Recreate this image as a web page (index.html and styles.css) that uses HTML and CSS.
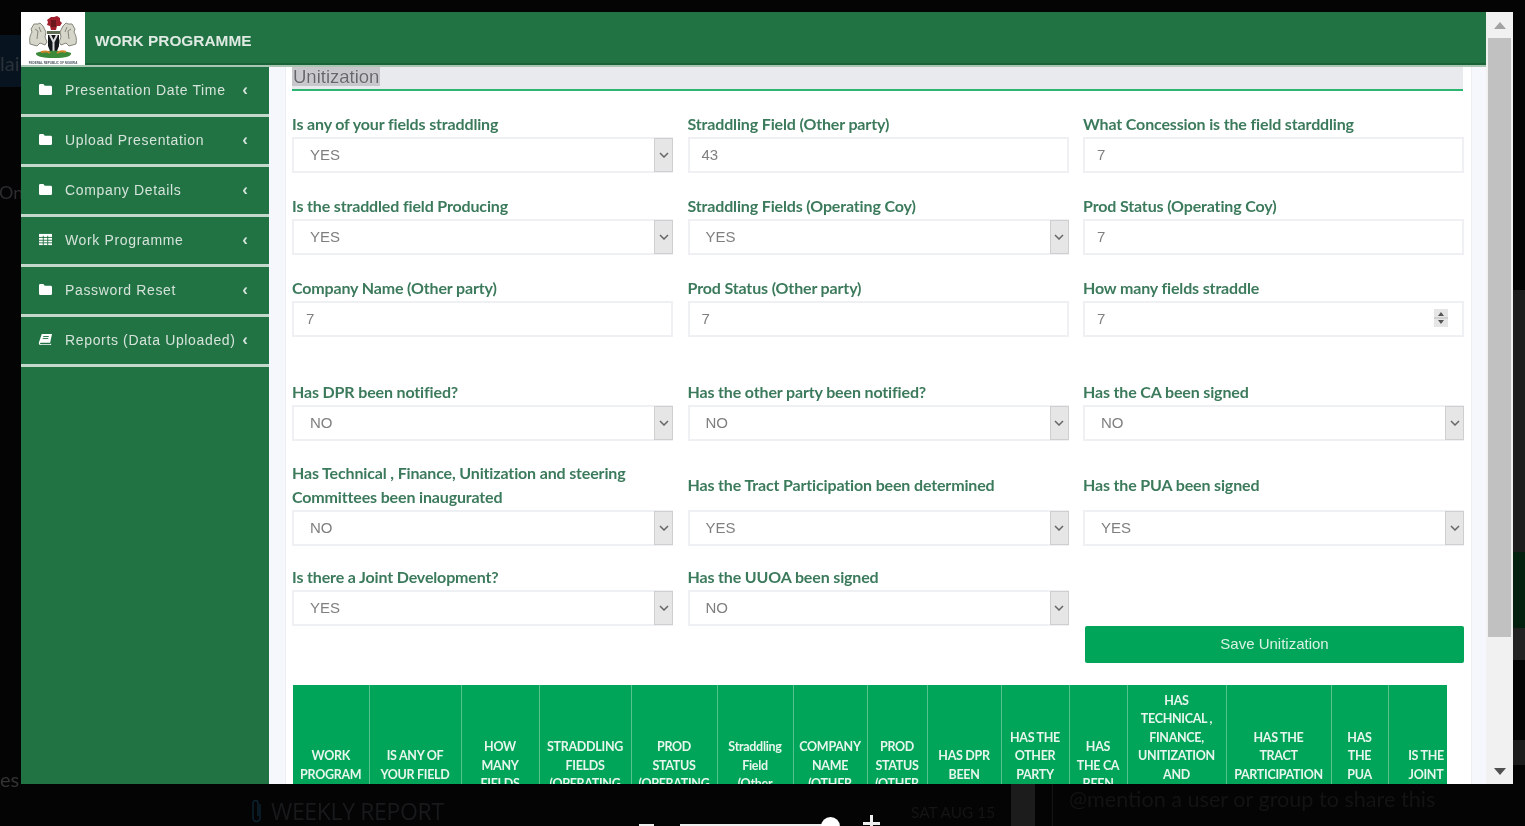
FILE: index.html
```html
<!DOCTYPE html>
<html lang="en">
<head>
<meta charset="utf-8">
<title>Work Programme</title>
<link rel="stylesheet" href="styles.css">
</head>
<body>
<div class="stage">
  <div class="backdrop">
    <div class="bd-navy"></div>
    <span class="bd-text bd-lai">lai</span>
    <span class="bd-text bd-one">One</span>
    <span class="bd-text bd-es">es</span>
    <svg class="bd-clip" viewBox="0 0 12 26" width="12" height="26"><path d="M9 6v14a3.500 3.500 0 0 1-7 0V5a2.500 2.500 0 0 1 5 0v13" fill="none" stroke="#0b2230" stroke-width="1.500"/></svg>
    <span class="bd-weekly">WEEKLY REPORT</span>
    <span class="bd-date">SAT AUG 15</span>
    <div class="bd-divider"></div>
    <div class="bd-comment"><span>@mention a user or group to share this</span></div>
    <div class="bd-minus"></div>
    <div class="bd-track"></div>
    <div class="bd-thumb"></div>
    <div class="bd-plus-h"></div>
    <div class="bd-plus-v"></div>
    <div class="bd-right"></div>
    <div class="bd-right-green"></div>
    <div class="bd-right-grey"></div>
    <div class="bd-right-grey2"></div>
  </div>

  <div class="modal">
    <div class="main">
      <header class="topbar">
        <div class="logo">
          <svg viewBox="0 0 64 54" width="64" height="54">
            <path d="M9 32c-1-5 0-9 2-12l-1-3 3-5 4 0 2-1 3 3 3 6-1 5 2 5-2 3-5-2-3 3z" fill="#d6d6ca" stroke="#85877b" stroke-width="1"/>
            <path d="M14 17l3 2-1 8M18 15l2 5" fill="none" stroke="#85877b" stroke-width="1"/>
            <path d="M55 32c1-5 0-9-2-12l1-3-3-5-4 0-2-1-3 3-3 6 1 5-2 5 2 3 5-2 3 3z" fill="#d6d6ca" stroke="#85877b" stroke-width="1"/>
            <path d="M50 17l-3 2 1 8M46 15l-2 5" fill="none" stroke="#85877b" stroke-width="1"/>
            <path d="M26 8l4-3 3 0 3-1 3 2 0 3 2 2-2 3-3 0-1 4h-5l-1-4-3-1 1-3z" fill="#a11f2c"/>
            <path d="M30 8h5v7h-5z" fill="#6b1720"/>
            <path d="M26 19h13v3H26z" fill="#5d6b52"/>
            <path d="M27 23h11v11l-2 5h-7l-2-5z" fill="#14171a"/>
            <path d="M29 23l3.500 7 3.500-7M32.500 30v9" fill="none" stroke="#dcdcdc" stroke-width="2"/>
            <path d="M15 41c6-3 29-3 35 0 1 3-5 5-17 5s-19-2-18-5z" fill="#3a8a3a"/>
            <path d="M20 40c4-1 7-1 9 1M36 41c3-2 6-2 9-1" fill="none" stroke="#d0862a" stroke-width="2"/>
            <text x="32" y="51.500" class="logo-text" text-anchor="middle">FEDERAL REPUBLIC OF NIGERIA</text>
          </svg>
        </div>
        <h1 class="app-title">WORK PROGRAMME</h1>
      </header>
      <div class="body-row">
        <nav class="sidebar">
          <a class="nav-item"><svg class="nav-icon" viewBox="0 0 16 14"><path d="M1 2.500A1.500 1.500 0 0 1 2.500 1h3.200l1.500 2h6.300A1.500 1.500 0 0 1 15 4.500v7a1.500 1.500 0 0 1-1.500 1.500h-11A1.500 1.500 0 0 1 1 11.500z" fill="#fff"/></svg><span class="nav-label">Presentation Date Time</span><span class="nav-caret">‹</span></a>
          <a class="nav-item"><svg class="nav-icon" viewBox="0 0 16 14"><path d="M1 2.500A1.500 1.500 0 0 1 2.500 1h3.200l1.500 2h6.300A1.500 1.500 0 0 1 15 4.500v7a1.500 1.500 0 0 1-1.500 1.500h-11A1.500 1.500 0 0 1 1 11.500z" fill="#fff"/></svg><span class="nav-label">Upload Presentation</span><span class="nav-caret">‹</span></a>
          <a class="nav-item"><svg class="nav-icon" viewBox="0 0 16 14"><path d="M1 2.500A1.500 1.500 0 0 1 2.500 1h3.200l1.500 2h6.300A1.500 1.500 0 0 1 15 4.500v7a1.500 1.500 0 0 1-1.500 1.500h-11A1.500 1.500 0 0 1 1 11.500z" fill="#fff"/></svg><span class="nav-label">Company Details</span><span class="nav-caret">‹</span></a>
          <a class="nav-item"><svg class="nav-icon" viewBox="0 0 16 14"><path d="M1 1h14v12H1z" fill="#fff"/><path d="M1 4.800h14M1 7.800h14M1 10.600h14M5.600 3v10M10.400 3v10" stroke="#217344" stroke-width="1"/></svg><span class="nav-label">Work Programme</span><span class="nav-caret">‹</span></a>
          <a class="nav-item"><svg class="nav-icon" viewBox="0 0 16 14"><path d="M1 2.500A1.500 1.500 0 0 1 2.500 1h3.200l1.500 2h6.300A1.500 1.500 0 0 1 15 4.500v7a1.500 1.500 0 0 1-1.500 1.500h-11A1.500 1.500 0 0 1 1 11.500z" fill="#fff"/></svg><span class="nav-label">Password Reset</span><span class="nav-caret">‹</span></a>
          <a class="nav-item"><svg class="nav-icon" viewBox="0 0 16 14"><path d="M4 1h11l-2 9.500H2.800C1.800 10.500 2 12 3 12h10l1-1v2H2.500C1 13 .6 11.500 1 10z" fill="#fff"/><path d="M5.500 3.800h6M5 6h6" stroke="#217344" stroke-width="1"/></svg><span class="nav-label">Reports (Data Uploaded)</span><span class="nav-caret">‹</span></a>
        </nav>
        <main class="content">
          <section class="panel">
            <div class="section-title"><span>Unitization</span></div>

            <div class="form-grid">
              <div class="field"><label>Is any of your fields straddling</label><div class="select"><span>YES</span><i class="arrow"><svg viewBox="0 0 10 6" width="10" height="6"><path d="M1 1l4 4 4-4" fill="none" stroke="#666" stroke-width="1.500"/></svg></i></div></div>
              <div class="field"><label>Straddling Field (Other party)</label><div class="input">43</div></div>
              <div class="field"><label>What Concession is the field starddling</label><div class="input">7</div></div>

              <div class="field"><label>Is the straddled field Producing</label><div class="select"><span>YES</span><i class="arrow"><svg viewBox="0 0 10 6" width="10" height="6"><path d="M1 1l4 4 4-4" fill="none" stroke="#666" stroke-width="1.500"/></svg></i></div></div>
              <div class="field"><label>Straddling Fields (Operating Coy)</label><div class="select"><span>YES</span><i class="arrow"><svg viewBox="0 0 10 6" width="10" height="6"><path d="M1 1l4 4 4-4" fill="none" stroke="#666" stroke-width="1.500"/></svg></i></div></div>
              <div class="field"><label>Prod Status (Operating Coy)</label><div class="input">7</div></div>

              <div class="field"><label>Company Name (Other party)</label><div class="input">7</div></div>
              <div class="field"><label>Prod Status (Other party)</label><div class="input">7</div></div>
              <div class="field"><label>How many fields straddle</label><div class="input input-number"><span>7</span><i class="spinner"><svg viewBox="0 0 14 18" width="14" height="18"><path d="M4 7l3-4 3 4zM4 11l3 4 3-4z" fill="#555"/><path d="M0 9h14" stroke="#bbb"/></svg></i></div></div>
            </div>

            <div class="form-grid form-grid-second">
              <div class="field"><label>Has DPR been notified?</label><div class="select"><span>NO</span><i class="arrow"><svg viewBox="0 0 10 6" width="10" height="6"><path d="M1 1l4 4 4-4" fill="none" stroke="#666" stroke-width="1.500"/></svg></i></div></div>
              <div class="field"><label>Has the other party been notified?</label><div class="select"><span>NO</span><i class="arrow"><svg viewBox="0 0 10 6" width="10" height="6"><path d="M1 1l4 4 4-4" fill="none" stroke="#666" stroke-width="1.500"/></svg></i></div></div>
              <div class="field"><label>Has the CA been signed</label><div class="select"><span>NO</span><i class="arrow"><svg viewBox="0 0 10 6" width="10" height="6"><path d="M1 1l4 4 4-4" fill="none" stroke="#666" stroke-width="1.500"/></svg></i></div></div>

              <div class="field"><label class="label-double">Has Technical , Finance, Unitization and steering<br>Committees been inaugurated</label><div class="select"><span>NO</span><i class="arrow"><svg viewBox="0 0 10 6" width="10" height="6"><path d="M1 1l4 4 4-4" fill="none" stroke="#666" stroke-width="1.500"/></svg></i></div></div>
              <div class="field"><label class="label-mid">Has the Tract Participation been determined</label><div class="select"><span>YES</span><i class="arrow"><svg viewBox="0 0 10 6" width="10" height="6"><path d="M1 1l4 4 4-4" fill="none" stroke="#666" stroke-width="1.500"/></svg></i></div></div>
              <div class="field"><label class="label-mid">Has the PUA been signed</label><div class="select"><span>YES</span><i class="arrow"><svg viewBox="0 0 10 6" width="10" height="6"><path d="M1 1l4 4 4-4" fill="none" stroke="#666" stroke-width="1.500"/></svg></i></div></div>

              <div class="field"><label>Is there a Joint Development?</label><div class="select"><span>YES</span><i class="arrow"><svg viewBox="0 0 10 6" width="10" height="6"><path d="M1 1l4 4 4-4" fill="none" stroke="#666" stroke-width="1.500"/></svg></i></div></div>
              <div class="field"><label>Has the UUOA been signed</label><div class="select"><span>NO</span><i class="arrow"><svg viewBox="0 0 10 6" width="10" height="6"><path d="M1 1l4 4 4-4" fill="none" stroke="#666" stroke-width="1.500"/></svg></i></div></div>
            </div>

            <div class="actions"><button class="save">Save Unitization</button></div>

            <div class="table-wrap">
              <table class="data-table">
                <colgroup>
                  <col class="c1"><col class="c2"><col class="c3"><col class="c4"><col class="c5"><col class="c6"><col class="c7"><col class="c8"><col class="c9"><col class="c10"><col class="c11"><col class="c12"><col class="c13"><col class="c14"><col class="c15">
                </colgroup>
                <thead>
                  <tr>
                    <th>WORK<br>PROGRAM<br>YEAR</th>
                    <th>IS ANY OF<br>YOUR FIELD<br>STRADDLING</th>
                    <th>HOW<br>MANY<br>FIELDS<br>STRADDLE</th>
                    <th>STRADDLING<br>FIELDS<br>(OPERATING<br>COY)</th>
                    <th>PROD<br>STATUS<br>(OPERATING<br>COY)</th>
                    <th>Straddling<br>Field<br>(Other<br>party)</th>
                    <th>COMPANY<br>NAME<br>(OTHER<br>PARTY)</th>
                    <th>PROD<br>STATUS<br>(OTHER<br>PARTY)</th>
                    <th>HAS DPR<br>BEEN<br>NOTIFIED</th>
                    <th>HAS THE<br>OTHER<br>PARTY<br>BEEN<br>NOTIFIED</th>
                    <th>HAS<br>THE CA<br>BEEN<br>SIGNED</th>
                    <th>HAS<br>TECHNICAL ,<br>FINANCE,<br>UNITIZATION<br>AND<br>STEERING<br>COMMITTEES<br>BEEN<br>INAUGURATED</th>
                    <th>HAS THE<br>TRACT<br>PARTICIPATION<br>BEEN<br>DETERMINED</th>
                    <th>HAS<br>THE<br>PUA<br>BEEN<br>SIGNED</th>
                    <th>IS THE<br>JOINT<br>DEVELOPMENT</th>
                  </tr>
                </thead>
              </table>
            </div>
          </section>
        </main>
      </div>
    </div>
    <aside class="scrollbar">
      <div class="sb-btn"><svg viewBox="0 0 12 7" width="12" height="7"><path d="M6 0l6 7H0z" fill="#a3a3a3"/></svg></div>
      <div class="sb-track"><div class="sb-thumb"></div></div>
      <div class="sb-btn sb-btn-down"><svg viewBox="0 0 12 7" width="12" height="7"><path d="M0 0h12L6 7z" fill="#505050"/></svg></div>
    </aside>
  </div>
</div>
</body>
</html>
```

FILE: styles.css
```css
* { box-sizing: border-box; }
html, body { margin: 0; height: 100%; background: #000; overflow: hidden; }
body { font-family: "Liberation Sans", Arial, sans-serif; }

.stage { position: relative; width: 1525px; height: 826px; padding: 12px 12px 0 21px; background: #040404; }

/* dimmed page behind the dialog */
.backdrop { position: absolute; inset: 0; filter: blur(.6px); }
.bd-navy { position: absolute; left: 0; top: 35px; width: 21px; height: 52px; background: #07141f; }
.bd-text { position: absolute; left: 0; font: 20px Lato, sans-serif; color: #2a2c2e; }
.bd-lai { top: 51px; color: #2a3138; }
.bd-one { top: 181px; left: -1px; font-size: 18px; }
.bd-es { top: 767px; color: #333; }
.bd-clip { position: absolute; left: 251px; top: 798px; }
.bd-weekly { position: absolute; left: 271px; top: 795px; font: 23px "Open Sans", sans-serif; letter-spacing: -.35px; color: #17191b; }
.bd-date { position: absolute; left: 911px; top: 803px; font: 15.400px Lato, sans-serif; color: #141414; }
.bd-divider { position: absolute; left: 1011px; top: 784px; width: 24px; height: 42px; background: #1c1c1c; }
.bd-comment { position: absolute; left: 1052px; top: 784px; width: 473px; height: 42px; border-left: 1px solid #141414; padding: 2px 0 0 16px; font: 21.600px Lato, sans-serif; color: #131313; }
.bd-minus { position: absolute; left: 639px; top: 824px; width: 15px; height: 2px; background: #eee; }
.bd-track { position: absolute; left: 680px; top: 824px; width: 150px; height: 2px; background: #eee; }
.bd-thumb { position: absolute; left: 821px; top: 817px; width: 19px; height: 19px; border-radius: 50%; background: #fff; }
.bd-plus-h { position: absolute; left: 863px; top: 822px; width: 17px; height: 3px; background: #eee; }
.bd-plus-v { position: absolute; left: 870px; top: 815px; width: 3px; height: 11px; background: #eee; }
.bd-right { position: absolute; left: 1513px; top: 290px; width: 12px; height: 310px; background: #1d1d1d; }
.bd-right-green { position: absolute; left: 1513px; top: 552px; width: 12px; height: 76px; background: #04200f; }
.bd-right-grey { position: absolute; left: 1513px; top: 628px; width: 12px; height: 32px; background: #222; }
.bd-right-grey2 { position: absolute; left: 1513px; top: 740px; width: 12px; height: 25px; background: #1c1c1c; }

/* dialog */
.modal { position: relative; display: flex; width: 1492px; height: 772px; overflow: hidden; background: #fff; filter: blur(.65px); }
.main { display: flex; flex-direction: column; width: 1465px; height: 100%; }

.topbar { display: flex; align-items: center; flex: none; height: 55px; background: #217344; border-bottom: 2px solid #a9c6b3; box-shadow: inset 0 -2px 0 #1a6238; }
.logo { flex: none; width: 64px; height: 53px; background: #fff; overflow: hidden; }
.logo svg { display: block; }
.logo-text { font: 700 3px "Liberation Sans", sans-serif; fill: #4a5560; }
.app-title { margin: 4px 0 0 10px; font: 700 15.400px/1 "Liberation Sans", sans-serif; color: #dfeae3; }

.body-row { display: flex; flex: 1; min-height: 0; }

.sidebar { flex: none; width: 248px; background: #217344; }
.nav-item { display: flex; align-items: center; height: 50px; padding: 0 21px 2px 17px; border-bottom: 3px solid #c4d8cb; color: #d5e3da; font-size: 14px; }
.nav-icon { flex: none; width: 15px; height: 13px; margin-right: 12px; }
.nav-label { flex: 1; white-space: nowrap; letter-spacing: .65px; }
.nav-caret { flex: none; font-size: 17px; font-weight: 700; line-height: 1; }

.content { flex: 1; min-width: 0; padding: 0 14px 0 16px; background: #f6f7fc; }
.panel { height: 100%; padding: 0 8px 0 6px; background: #fff; border: solid #eceef2; border-width: 0 1px; overflow: hidden; }

.section-title { height: 24px; background: #e8eaee; border-bottom: 2px solid #2db573; font: 18.500px/19px "Liberation Sans", sans-serif; color: #66666a; }
.section-title span { display: inline-block; padding: 0 1px; background: #c8c8cc; text-shadow: 0 0 1px #fff; }

.form-grid { display: grid; grid-template-columns: repeat(3, 381px); column-gap: 14.500px; row-gap: 22px; margin: 22px -1px 0 0; align-items: end; }
.form-grid-second { margin-top: 44px; row-gap: 20px; }

.field label { display: block; margin-top: -1px; padding-bottom: 1px; font: 700 16px/24px Lato, sans-serif; letter-spacing: -.15px; color: #3c7a5c; }
.field .label-double { margin-top: 0; }
.field .label-mid { padding-bottom: 13px; }
.input, .select { display: flex; align-items: center; height: 36px; border: 2px solid #eef0f3; background: #fff; color: #7f7f7f; font-size: 15px; }
.input { padding: 0 0 2px 12px; }
.select { padding-left: 16px; justify-content: space-between; border-right: 0; }
.select span { padding-bottom: 2px; }
.arrow { display: flex; align-items: center; justify-content: center; flex: none; width: 19px; height: 34px; background: #e6e6e6; border: 1px solid #cfcfcf; }
.input-number { justify-content: space-between; padding-right: 14px; }
.spinner { display: block; width: 14px; height: 18px; background: #e6e6e6; }
.spinner svg { display: block; }

.actions { display: grid; grid-template-columns: 379px; justify-content: end; margin-right: -1px; }
.save { height: 37px; padding: 0 0 2px; border: 0; border-radius: 2px; background: #00a55a; color: #d8f2e4; font: 15px "Liberation Sans", sans-serif; }

.table-wrap { width: 1154px; margin: 22px 0 0 1px; overflow: hidden; }
.data-table { table-layout: fixed; width: 1171px; border-collapse: collapse; }
.data-table th { height: 180px; padding: 6px 2px; background: #00a55a; border-right: 1px solid #58c28e; color: #e6f6ed; font: 700 12.500px/18.500px Lato, sans-serif; letter-spacing: -.3px; text-align: center; vertical-align: middle; white-space: nowrap; }
.c1 { width: 76px; } .c2 { width: 92px; } .c3 { width: 78px; } .c4 { width: 92px; } .c5 { width: 86px; }
.c6 { width: 76px; } .c7 { width: 74px; } .c8 { width: 60px; } .c9 { width: 74px; } .c10 { width: 68px; }
.c11 { width: 58px; } .c12 { width: 99px; } .c13 { width: 105px; } .c14 { width: 57px; } .c15 { width: 76px; }

/* scrollbar */
.scrollbar { display: flex; flex-direction: column; flex: none; width: 27px; background: #f1f1f1; }
.sb-btn { display: flex; align-items: center; justify-content: center; flex: none; height: 26px; }
.sb-track { flex: 1; min-height: 0; padding: 0 2px 0 2px; }
.sb-thumb { height: 599px; background: #c1c1c1; }
```
